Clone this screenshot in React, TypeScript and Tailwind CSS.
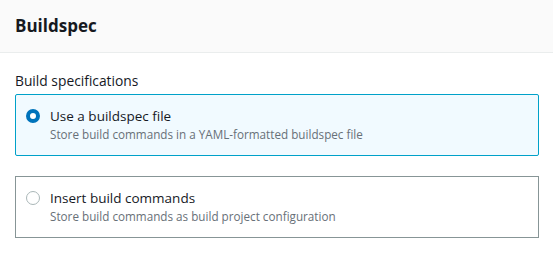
export default function App() {
  return (
    <div className="min-h-[254px] w-[553px] bg-white font-['Open_Sans',sans-serif] text-[#16191f]">
      <div className="flex h-[53px] items-center border-b border-[#eaeded] bg-[#fafafa] px-[15px]">
        <h2 className="text-[17px] font-bold">Buildspec</h2>
      </div>
      <div className="pl-[15px] pr-[14px] pt-[18px]">
        <p className="text-[13.8px] leading-5">Build specifications</p>
        <div className="mt-[3px] flex flex-col gap-[20px]">
          <Option
            selected
            title="Use a buildspec file"
            description="Store build commands in a YAML-formatted buildspec file"
          />
          <Option
            title="Insert build commands"
            description="Store build commands as build project configuration"
          />
        </div>
      </div>
    </div>
  );
}

function Option(props: { selected?: boolean; title: string; description: string }) {
  return (
    <div
      className={
        props.selected
          ? 'flex h-[62px] gap-[10px] rounded-[2px] border border-[#00a1c9] bg-[#f1faff] px-[10px] pt-[11px]'
          : 'flex h-[62px] gap-[10px] border border-[#879596] bg-white px-[10px] pt-[11px]'
      }
    >
      <div className="mt-[3px] flex h-[14px] w-[14px] shrink-0 items-center justify-center">
        {props.selected ? (
          <span className="h-[14px] w-[14px] rounded-full border-[4px] border-[#0073bb] bg-white" />
        ) : (
          <span className="h-[14px] w-[14px] rounded-full border border-[#aab7b8] bg-white" />
        )}
      </div>
      <div>
        <p className="text-[13.5px] leading-5">{props.title}</p>
        <p className="text-[11.7px] leading-4 text-[#687078]">{props.description}</p>
      </div>
    </div>
  );
}
